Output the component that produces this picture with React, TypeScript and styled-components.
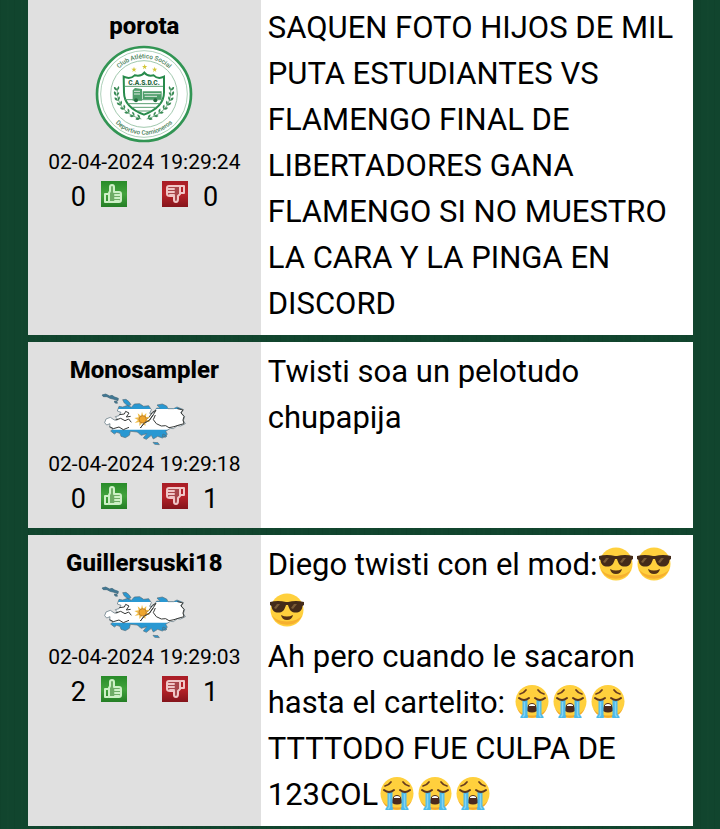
import React from 'react';
import styled, { createGlobalStyle } from 'styled-components';

const GlobalStyle = createGlobalStyle`
  * { box-sizing: border-box; }
  body {
    margin: 0;
    color: #000;
    background-color: #11452e;
    background-image: repeating-linear-gradient(90deg, rgba(0, 20, 10, 0.05) 0 1px, transparent 1px 7px, rgba(40, 90, 60, 0.05) 7px 9px, transparent 9px 14px);
    font-family: Roboto, "Liberation Sans", sans-serif;
    overflow: hidden;
  }
`;

const Thread = styled.main`
  display: flex;
  flex-direction: column;
  gap: 7px;
  margin: 0 27px 3px 28px;
`;

const Post = styled.article<{ $cut?: boolean }>`
  display: grid;
  grid-template-columns: 35% 1fr;
  margin-top: ${(p) => (p.$cut ? '-2px' : '0')};
  background: #fff;
`;

const Author = styled.aside`
  display: flex;
  flex-direction: column;
  align-items: center;
  padding: 9px 0 6px;
  background: #e0e0e0;
`;

const Name = styled.strong`
  font-size: 24px;
  font-weight: 800;
  line-height: 38px;
`;

const Avatar = styled.div<{ $gap: number }>`
  display: flex;
  margin-bottom: ${(p) => p.$gap}px;
`;

const Stamp = styled.time`
  font-size: 21px;
  line-height: 24px;
`;

const Votes = styled.div`
  display: flex;
  gap: 35px;
  font-size: 27px;
  line-height: 46px;
`;

const Vote = styled.div`
  display: flex;
  align-items: center;
  gap: 15px;
`;

const VoteButton = styled.button<{ $down?: boolean }>`
  display: flex;
  width: 26px;
  height: 26px;
  margin-bottom: 6px;
  padding: 0;
  border: 0;
  background: ${(p) => (p.$down ? 'linear-gradient(#a91d26, #b82329 50%, #84141b)' : 'linear-gradient(#288b29, #43a33d 50%, #247e25)')};
  cursor: pointer;
`;

const Message = styled.div`
  padding: 7px 7px 8px;
  font-size: 31px;
  line-height: 46px;
`;

const Paragraph = styled.p`
  margin: 0;
`;

const EmojiSvg = styled.svg`
  width: 34px;
  height: 34px;
  margin: 0 2px;
  vertical-align: -6px;
`;

function Cool() {
  return (
    <EmojiSvg viewBox="0 0 34 34" role="img" aria-label="Cool">
      <circle cx="17" cy="17" r="16.500" fill="#ffd03d" />
      <path d="M2 22C6 35 28 35 32 22C28 30 7 31 2 22Z" fill="#f6b02f" />
      <path d="M0 9Q8 7 16 9H18Q26 7 34 9V12L32.500 13C32 18 29 20 24.500 19.500C20 19 19 15 18 12H16C15 15 14 19 9.500 19.500C5 20 2 18 1.500 13L0 12Z" fill="#442b19" />
      <path d="M7 11H10L6 16L4 15ZM24 11H27L23 16L21 15Z" fill="#795a35" />
      <path d="M11 22Q17 25 23 22Q22 27 17 27Q12 27 11 22Z" fill="#563315" />
    </EmojiSvg>
  );
}

function Sob() {
  return (
    <EmojiSvg viewBox="0 0 34 34" role="img" aria-label="Llorando">
      <circle cx="17" cy="16.500" r="16.500" fill="#ffd03d" />
      <path d="M2 23C7 33 27 33 32 23C28 36 6 36 2 23Z" fill="#f2a82d" />
      <path d="M5 9Q9 8 11 5M23 5Q25 8 29 9" stroke="#673b20" strokeWidth="1.700" fill="none" strokeLinecap="round" />
      <path d="M12 26Q12 18 17 18T22 26Q17 29 12 26Z" fill="#4b291d" />
      <path d="M14 20Q17 18 20 20V21H14Z" fill="#fff" />
      <path d="M7.500 15H12.500V30Q14 33 12 33H7Q4 33 6 31L7.500 29ZM21.500 15H26.500V29L28 31Q30 33 27 33H22Q20 33 21.500 30Z" fill="#4cb9e9" />
      <path d="M9.500 17V30L8 32M24.500 17V30L26 32" stroke="#82d3f3" strokeWidth="1.500" fill="none" />
      <path d="M4 13Q9 17 14 13M20 13Q25 17 30 13" stroke="#5a351e" strokeWidth="2" fill="none" strokeLinecap="round" />
    </EmojiSvg>
  );
}

function Hand({ down }: { down?: boolean }) {
  return (
    <svg width="26" height="26" viewBox="0 0 26 26" aria-hidden="true" fill="none" stroke={down ? '#f0c6c6' : '#cdf0c6'} strokeWidth="2" strokeLinejoin="round" strokeLinecap="round">
      {down ? (
        <>
          <path d="M18 5H7Q5 5 5 7V13Q5 15 8 15H12V19Q12 21 14 21Q16 21 16 18V15L18 13Z" fill="#a8474b" />
          <path d="M6 8H12M6 11H12M8 14H12M19 5H22V12H19" />
        </>
      ) : (
        <>
          <path d="M8 12L9 10V6Q9 4 11 4T13 6V11H18Q20 11 20 13V19Q20 21 18 21H8Z" fill="#6eac66" />
          <path d="M7 13H4V21H7M14 14H19M14 17H19M14 20H18" />
        </>
      )}
    </svg>
  );
}

const leaves = [[96, 145, -15], [95, 160, 5], [98, 176, -18], [105, 190, -32], [115, 203, -44], [128, 215, -52], [143, 225, -62], [160, 233, -72]];

function Crest() {
  return (
    <svg width="98" height="98" viewBox="31 15 294 294" role="img" aria-label="Club Atlético Social Deportivo Camioneros">
      <defs>
        <path id="crest-top" d="M71 162A107 107 0 0 1 285 162" />
        <path id="crest-bottom" d="M56 162A122 122 0 0 0 300 162" />
      </defs>
      <circle cx="178" cy="162" r="141" fill="#fff" stroke="#329554" strokeWidth="8" />
      <circle cx="178" cy="162" r="130" fill="none" stroke="#83b895" strokeWidth="2" />
      <circle cx="178" cy="162" r="100" fill="none" stroke="#6fac84" strokeWidth="2" />
      <g fill="#49815a" fontFamily="Roboto, sans-serif" fontSize="19" fontWeight="500" textAnchor="middle">
        <text><textPath href="#crest-top" startOffset="50%">Club Atlético Social</textPath></text>
        <text><textPath href="#crest-bottom" startOffset="50%">Deportivo Camioneros</textPath></text>
      </g>
      <g fill="#d3c636">
        {[[148, 88], [180, 80], [210, 88]].map(([x, y]) => (
          <path key={x} transform={`translate(${x} ${y})`} d="M0-8L2-2H8L3 2L5 8L0 4L-5 8L-3 2L-8-2H-2Z" />
        ))}
      </g>
      <path d="M117 110Q137 119 150 106Q171 110 179 98Q188 110 207 106Q220 119 238 110V157Q238 202 178 224Q118 202 118 157Z" fill="#fff" stroke="#288b4c" strokeWidth="6" />
      <path d="M121 139H235M121 179H235M129 191H227M142 202H214M158 213H198" stroke="#5a9f72" strokeWidth="3" />
      <text x="178" y="134" textAnchor="middle" fill="#28683f" fontFamily="Roboto, sans-serif" fontSize="20" fontWeight="900">C.A.S.D.C.</text>
      <path d="M144 151L151 144L172 147V182H144ZM174 154H231V178H174Z" fill="#4d9d6a" />
      <path d="M148 154H166M148 162H166M178 161H228M180 169H217" stroke="#dcebdf" strokeWidth="3" />
      <circle cx="154" cy="181" r="6" fill="#246d40" />
      <circle cx="212" cy="181" r="6" fill="#246d40" />
      {[false, true].map((flip) => (
        <g key={String(flip)} transform={flip ? 'translate(356 0) scale(-1 1)' : undefined} fill="#398b55">
          <path d="M98 145Q93 215 170 237" fill="none" stroke="#398b55" strokeWidth="2" />
          {leaves.map(([x, y, angle]) => (
            <g key={y} transform={`translate(${x} ${y}) rotate(${angle})`}>
              <path d="M0 7Q-10 3-7-6Q1-5 0 7ZM0 7Q10 4 8-5Q1-3 0 7Z" />
            </g>
          ))}
        </g>
      ))}
    </svg>
  );
}

const islands = 'M24 24L35 21L47 27L54 25L62 30L73 34L72 41L60 37L48 34L39 29L28 29Z M61 42L69 43L70 49L63 48Z M86 38L96 37L105 44L111 53L103 57L91 48Z M75 58L86 60L101 55L112 61L121 51L137 50L149 58L164 56L172 68L167 79L172 81L181 74L188 63L198 64L189 54L205 51L218 57L222 65L239 65L249 60L269 68L260 76L272 89L268 101L274 110L260 117L250 116L238 125L229 124L215 133L220 142L205 153L191 148L178 156L172 145L157 157L148 153L158 140L142 145L134 139L130 135L109 133L106 145L94 152L81 148L78 139L68 136L61 141L50 132L58 125L47 121L48 110L38 114L32 107L36 96L49 91L61 99L72 98L64 89L75 86L81 76L70 72Z M177 166L192 167L196 173L182 172Z M207 141L219 147L214 151L205 149Z';

function Islands() {
  const clip = React.useId();
  return (
    <svg width="100" height="60" viewBox="0 6 300 180" role="img" aria-label="Islas Malvinas">
      <clipPath id={clip}><path d={islands} /></clipPath>
      <g clipPath={`url(#${clip})`}>
        <path fill="#fff" d="M0 0H300V190H0Z" />
        <path fill="#2998d2" d="M0 0H300V66H0ZM0 128H300V190H0Z" />
        <path fill="#3f7894" d="M20 15H75V50H20Z" />
      </g>
      <path d={islands} fill="none" stroke="#536b77" strokeWidth="2" strokeLinejoin="round" />
      <path d="M76 83L91 81L95 73L105 78L97 90L110 88M65 99L80 94L93 101L104 96L112 106M47 119L58 125L75 120L88 128L105 121M139 123L151 108L166 100L178 83L186 70L175 76L165 91L151 101M184 84L178 98L187 110L202 117L215 116L225 122L240 119L252 115L270 110L267 99L270 88L261 78L267 69L250 65" fill="none" stroke="#383a38" strokeWidth="3" />
      <path d="M144 74L148 87L157 78L156 90L168 89L158 97L168 105L155 104L154 117L145 107L136 117L136 105L122 108L132 99L121 93L134 91L131 79L141 87Z" fill="#f0bd49" />
      <circle cx="146" cy="97" r="11" fill="#eea62d" stroke="#a8692a" strokeWidth="2" />
      <path d="M139 123L151 108L166 100L178 83" fill="none" stroke="#383a38" strokeWidth="3" />
    </svg>
  );
}

interface PostData {
  name: string;
  crest?: boolean;
  date: string;
  up: number;
  down: number;
  body: React.ReactNode;
}

const posts: PostData[] = [
  {
    name: 'porota', crest: true, date: '02-04-2024 19:29:24', up: 0, down: 0,
    body: <Paragraph>SAQUEN FOTO HIJOS DE MIL PUTA ESTUDIANTES VS FLAMENGO FINAL DE LIBERTADORES GANA FLAMENGO SI NO MUESTRO LA CARA Y LA PINGA EN DISCORD</Paragraph>,
  },
  {
    name: 'Monosampler', date: '02-04-2024 19:29:18', up: 0, down: 1,
    body: <Paragraph>Twisti soa un pelotudo chupapija</Paragraph>,
  },
  {
    name: 'Guillersuski18', date: '02-04-2024 19:29:03', up: 2, down: 1,
    body: (
      <>
        <Paragraph>Diego twisti con el mod:<Cool /><Cool /><Cool /></Paragraph>
        <Paragraph>Ah pero cuando le sacaron hasta el cartelito: <Sob /><Sob /><Sob /></Paragraph>
        <Paragraph>TTTTODO FUE CULPA DE 123COL<Sob /><Sob /><Sob /></Paragraph>
      </>
    ),
  },
];

export default function App() {
  return (
    <>
      <GlobalStyle />
      <Thread>
        {posts.map((post) => (
          <Post key={post.date} $cut={post.crest}>
            <Author>
              <Name>{post.name}</Name>
              <Avatar $gap={post.crest ? 7 : 3}>{post.crest ? <Crest /> : <Islands />}</Avatar>
              <Stamp>{post.date}</Stamp>
              <Votes>
                <Vote>
                  <span>{post.up}</span>
                  <VoteButton type="button" aria-label="Me gusta"><Hand /></VoteButton>
                </Vote>
                <Vote>
                  <VoteButton type="button" $down aria-label="No me gusta"><Hand down /></VoteButton>
                  <span>{post.down}</span>
                </Vote>
              </Votes>
            </Author>
            <Message>{post.body}</Message>
          </Post>
        ))}
      </Thread>
    </>
  );
}
